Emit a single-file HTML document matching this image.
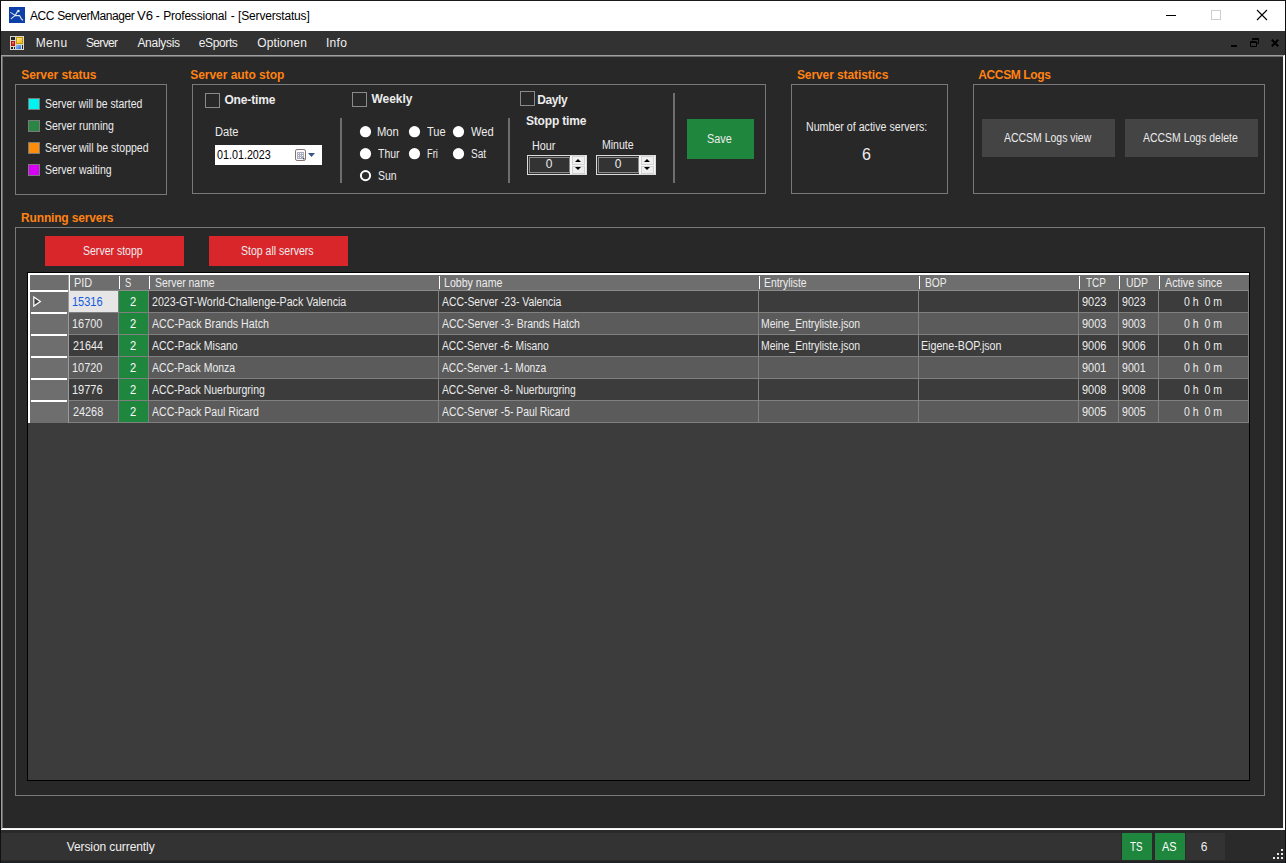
<!DOCTYPE html>
<html lang="de"><head><meta charset="utf-8"><title>ACC ServerManager V6 - Professional - [Serverstatus]</title>
<style>
html,body{margin:0;padding:0}
body{width:1286px;height:863px;position:relative;overflow:hidden;background:#282828;font-family:"Liberation Sans",sans-serif;font-size:12px;color:#ececec}
body>div,body>svg,body>span{position:absolute;display:block;box-sizing:content-box}
.t{white-space:pre;line-height:1}
</style></head>
<body>
<div style="left:0px;top:0px;width:1286px;height:31px;background:#ffffff;"></div>
<div style="left:0px;top:31px;width:1286px;height:24px;background:#323232;"></div>
<div style="left:0px;top:830px;width:1286px;height:33px;background:#2a2a2a;"></div>
<div style="left:0px;top:861px;width:1286px;height:1px;background:#222222;"></div>
<div style="left:0px;top:862px;width:1286px;height:1px;background:#1d2226;"></div>
<svg style="left:9px;top:7px" width="16" height="16" viewBox="0 0 16 16"><rect width="16" height="16" fill="#0d3fa8"/>
<path d="M2.2 11.6 L6.2 8.4 L8.4 4.6 M6.2 8.4 L1.8 5.6 M6.2 8.4 L10.6 8.6 L12.2 11.6 L13.6 13" stroke="#dde5ea" stroke-width="1.1" fill="none" stroke-linecap="round"/>
<circle cx="9.4" cy="4" r="1.3" fill="#dde5ea"/></svg>
<div style="left:1166px;top:15px;width:10px;height:1px;background:#000;"></div>
<div style="left:1211px;top:10px;width:8px;height:8px;border:1px solid #cdcdcd"></div>
<svg style="left:1256px;top:9px" width="12" height="12" viewBox="0 0 12 12"><path d="M1 1 L11 11 M11 1 L1 11" stroke="#000" stroke-width="1.1" fill="none"/></svg>
<svg style="left:10px;top:36px" width="14" height="14" viewBox="0 0 14 14"><defs>
<linearGradient id="gy" x1="0" y1="0" x2="1" y2="1"><stop offset="0" stop-color="#fff3a8"/><stop offset="1" stop-color="#f2b100"/></linearGradient>
<linearGradient id="gr" x1="0" y1="0" x2="0" y2="1"><stop offset="0" stop-color="#f5867a"/><stop offset="1" stop-color="#d4200f"/></linearGradient>
<linearGradient id="gb" x1="0" y1="0" x2="1" y2="1"><stop offset="0" stop-color="#8fc0f7"/><stop offset="1" stop-color="#2f6fd6"/></linearGradient></defs>
<rect width="14" height="14" fill="#dad7d0"/>
<rect x="1" y="1" width="4" height="3" fill="#262626"/><rect x="6" y="1" width="7" height="7" fill="#c79a00"/><rect x="7" y="2" width="5" height="5" fill="url(#gy)"/>
<rect x="1" y="5" width="4" height="5" fill="#b91508"/><rect x="2" y="6" width="2" height="3" fill="url(#gr)"/>
<rect x="1" y="11" width="2" height="2" fill="#262626"/><rect x="4" y="11" width="1" height="2" fill="#262626"/>
<rect x="6" y="9" width="5" height="4" fill="url(#gb)"/><rect x="12" y="9" width="1" height="4" fill="#262626"/></svg>
<div style="left:1231px;top:45px;width:6px;height:2px;background:#000;"></div>
<svg style="left:1250px;top:38px" width="9" height="9" viewBox="0 0 9 9"><path d="M2.5 2.5 V0.5 H8.5 V5.5 H6.5 M2.5 1.5 H8.5" stroke="#000" fill="none"/><path d="M0.5 3.5 H6.5 V8.5 H0.5 Z M0.5 4.5 H6.5" stroke="#000" fill="none"/></svg>
<svg style="left:1271px;top:39px" width="8" height="8" viewBox="0 0 8 8"><path d="M0.8 0.8 L7.2 7.2 M7.2 0.8 L0.8 7.2" stroke="#000" stroke-width="2" fill="none"/></svg>
<div style="left:1px;top:55px;width:1284px;height:775px;background:#282828;"></div>
<div style="left:1px;top:55px;width:1284px;height:1px;background:#a0a0a0;"></div>
<div style="left:2px;top:56px;width:1282px;height:1px;background:#696969;"></div>
<div style="left:1px;top:55px;width:1px;height:775px;background:#a0a0a0;"></div>
<div style="left:2px;top:56px;width:1px;height:773px;background:#696969;"></div>
<div style="left:1283px;top:56px;width:1px;height:773px;background:#f0f0f0;"></div>
<div style="left:1284px;top:55px;width:1px;height:775px;background:#ffffff;"></div>
<div style="left:2px;top:828px;width:1282px;height:1px;background:#f0f0f0;"></div>
<div style="left:1px;top:829px;width:1284px;height:1px;background:#ffffff;"></div>
<div style="left:0px;top:0px;width:1286px;height:1px;background:#1a1a1a;"></div>
<div style="left:0px;top:0px;width:1px;height:863px;background:#101010;"></div>
<div style="left:1285px;top:0px;width:1px;height:863px;background:#101010;"></div>
<div style="left:15px;top:84px;width:150px;height:109px;border:1px solid #797979"></div>
<div style="left:192px;top:84px;width:572px;height:108px;border:1px solid #797979"></div>
<div style="left:791px;top:84px;width:155px;height:108px;border:1px solid #797979"></div>
<div style="left:973px;top:84px;width:290px;height:108px;border:1px solid #797979"></div>
<div style="left:15px;top:227px;width:1248px;height:567px;border:1px solid #797979"></div>
<div style="left:28px;top:98px;width:10px;height:10px;background:#00f5f0;border:1px solid #7a7a7a"></div>
<div style="left:28px;top:120px;width:10px;height:10px;background:#2a8743;border:1px solid #7a7a7a"></div>
<div style="left:28px;top:142px;width:10px;height:10px;background:#ff8c0a;border:1px solid #7a7a7a"></div>
<div style="left:28px;top:164px;width:10px;height:10px;background:#d800f5;border:1px solid #7a7a7a"></div>
<div style="left:205px;top:93px;width:13px;height:13px;border:1px solid #8a8a8a"></div>
<div style="left:352px;top:92px;width:13px;height:13px;border:1px solid #8a8a8a"></div>
<div style="left:520px;top:91px;width:13px;height:13px;border:1px solid #8a8a8a"></div>
<div style="left:215px;top:145px;width:107px;height:20px;background:#ffffff;"></div>
<svg style="left:295px;top:149px" width="11" height="12" viewBox="0 0 11 12"><rect x="0.5" y="0.5" width="10" height="11" rx="1.6" fill="#fbfbff" stroke="#86706b"/>
<rect x="2" y="3" width="7" height="7" fill="#a9aebd"/><g fill="#f4f5fa"><rect x="3" y="4" width="1" height="1"/><rect x="5" y="4" width="1" height="1"/><rect x="7" y="4" width="1" height="1"/>
<rect x="3" y="6" width="1" height="1"/><rect x="5" y="6" width="1" height="1"/><rect x="7" y="6" width="1" height="1"/><rect x="3" y="8" width="1" height="1"/><rect x="5" y="8" width="1" height="1"/></g>
<rect x="8" y="9" width="1.4" height="1.4" fill="#4a4a55"/></svg>
<svg style="left:308px;top:153px" width="7" height="4" viewBox="0 0 7 4"><path d="M0 0 H7 L3.5 4 Z" fill="#38528a"/></svg>
<div style="left:340px;top:118px;width:2px;height:65px;background:#6e6e6e;"></div>
<div style="left:508px;top:118px;width:2px;height:65px;background:#6e6e6e;"></div>
<div style="left:673px;top:93px;width:2px;height:90px;background:#6e6e6e;"></div>
<svg style="left:358px;top:124px" width="15" height="15"><circle cx="7.5" cy="7.7" r="5.6" fill="#fff"/></svg>
<svg style="left:407px;top:124px" width="15" height="15"><circle cx="7.5" cy="7.7" r="5.6" fill="#fff"/></svg>
<svg style="left:451px;top:124px" width="15" height="15"><circle cx="7.5" cy="7.7" r="5.6" fill="#fff"/></svg>
<svg style="left:358px;top:146px" width="15" height="15"><circle cx="7.5" cy="7.7" r="5.6" fill="#fff"/></svg>
<svg style="left:407px;top:146px" width="15" height="15"><circle cx="7.5" cy="7.7" r="5.6" fill="#fff"/></svg>
<svg style="left:451px;top:146px" width="15" height="15"><circle cx="7.5" cy="7.7" r="5.6" fill="#fff"/></svg>
<svg style="left:358px;top:168px" width="15" height="15"><circle cx="7.5" cy="7.6" r="4.6" fill="#2d2d2d" stroke="#fff" stroke-width="2"/></svg>
<div style="left:527px;top:155px;width:58px;height:18px;border:1px solid #dcdcdc;background:#303030"></div>
<div style="left:529px;top:157px;width:39px;height:14px;border:1px solid #8c8c8c;background:#333"></div>
<div style="left:570px;top:156px;width:16px;height:18px;background:#f7f7f7;"></div>
<div style="left:572px;top:156px;width:11px;height:7px;background:#efefef;border:1px solid #d2d2d2"></div>
<div style="left:572px;top:166px;width:11px;height:6px;background:#efefef;border:1px solid #d2d2d2"></div>
<svg style="left:575px;top:159px" width="6" height="3" viewBox="0 0 6 3"><path d="M0 3 H6 L3 0 Z" fill="#000"/></svg>
<svg style="left:575px;top:167px" width="6" height="3" viewBox="0 0 6 3"><path d="M0 0 H6 L3 3 Z" fill="#000"/></svg>
<div style="left:596px;top:155px;width:58px;height:18px;border:1px solid #dcdcdc;background:#303030"></div>
<div style="left:598px;top:157px;width:39px;height:14px;border:1px solid #8c8c8c;background:#333"></div>
<div style="left:639px;top:156px;width:16px;height:18px;background:#f7f7f7;"></div>
<div style="left:641px;top:156px;width:11px;height:7px;background:#efefef;border:1px solid #d2d2d2"></div>
<div style="left:641px;top:166px;width:11px;height:6px;background:#efefef;border:1px solid #d2d2d2"></div>
<svg style="left:644px;top:159px" width="6" height="3" viewBox="0 0 6 3"><path d="M0 3 H6 L3 0 Z" fill="#000"/></svg>
<svg style="left:644px;top:167px" width="6" height="3" viewBox="0 0 6 3"><path d="M0 0 H6 L3 3 Z" fill="#000"/></svg>
<div style="left:687px;top:119px;width:67px;height:40px;background:#1f873d;"></div>
<div style="left:982px;top:119px;width:133px;height:38px;background:#444444;"></div>
<div style="left:1125px;top:119px;width:133px;height:38px;background:#444444;"></div>
<div style="left:45px;top:236px;width:139px;height:30px;background:#d9262b;"></div>
<div style="left:209px;top:236px;width:139px;height:30px;background:#d9262b;"></div>
<div style="left:27px;top:272px;width:1223px;height:509px;background:#000;"></div>
<div style="left:28px;top:273px;width:1221px;height:507px;background:#3c3c3c;"></div>
<div style="left:28px;top:273px;width:1221px;height:2px;background:#ffffff;"></div>
<div style="left:28px;top:275px;width:1221px;height:15px;background:#6e6e6e;"></div>
<div style="left:28px;top:290px;width:1221px;height:1px;background:#8c8c8c;"></div>
<div style="left:68px;top:275px;width:1px;height:148px;background:#9a9a9a;"></div>
<div style="left:69px;top:273px;width:1px;height:18px;background:#ffffff;"></div>
<div style="left:119px;top:276px;width:1px;height:13px;background:#ffffff;"></div>
<div style="left:149px;top:276px;width:1px;height:13px;background:#ffffff;"></div>
<div style="left:439px;top:276px;width:1px;height:13px;background:#ffffff;"></div>
<div style="left:759px;top:276px;width:1px;height:13px;background:#ffffff;"></div>
<div style="left:919px;top:276px;width:1px;height:13px;background:#ffffff;"></div>
<div style="left:1079px;top:276px;width:1px;height:13px;background:#ffffff;"></div>
<div style="left:1119px;top:276px;width:1px;height:13px;background:#ffffff;"></div>
<div style="left:1159px;top:276px;width:1px;height:13px;background:#ffffff;"></div>
<div style="left:69px;top:291px;width:1180px;height:21px;background:#3c3c3c;"></div>
<div style="left:69px;top:312px;width:1180px;height:1px;background:#808080;"></div>
<div style="left:119px;top:291px;width:29px;height:21px;background:#1f873d;"></div>
<div style="left:30px;top:291px;width:38px;height:22px;background:#6e6e6e;"></div>
<div style="left:28px;top:290px;width:40px;height:2px;background:#ffffff;"></div>
<div style="left:69px;top:313px;width:1180px;height:21px;background:#5b5b5b;"></div>
<div style="left:69px;top:334px;width:1180px;height:1px;background:#808080;"></div>
<div style="left:119px;top:313px;width:29px;height:21px;background:#1f873d;"></div>
<div style="left:30px;top:313px;width:38px;height:22px;background:#6e6e6e;"></div>
<div style="left:31px;top:312px;width:36px;height:2px;background:#ffffff;"></div>
<div style="left:69px;top:335px;width:1180px;height:21px;background:#3c3c3c;"></div>
<div style="left:69px;top:356px;width:1180px;height:1px;background:#808080;"></div>
<div style="left:119px;top:335px;width:29px;height:21px;background:#1f873d;"></div>
<div style="left:30px;top:335px;width:38px;height:22px;background:#6e6e6e;"></div>
<div style="left:31px;top:334px;width:36px;height:2px;background:#ffffff;"></div>
<div style="left:69px;top:357px;width:1180px;height:21px;background:#5b5b5b;"></div>
<div style="left:69px;top:378px;width:1180px;height:1px;background:#808080;"></div>
<div style="left:119px;top:357px;width:29px;height:21px;background:#1f873d;"></div>
<div style="left:30px;top:357px;width:38px;height:22px;background:#6e6e6e;"></div>
<div style="left:31px;top:356px;width:36px;height:2px;background:#ffffff;"></div>
<div style="left:69px;top:379px;width:1180px;height:21px;background:#3c3c3c;"></div>
<div style="left:69px;top:400px;width:1180px;height:1px;background:#808080;"></div>
<div style="left:119px;top:379px;width:29px;height:21px;background:#1f873d;"></div>
<div style="left:30px;top:379px;width:38px;height:22px;background:#6e6e6e;"></div>
<div style="left:31px;top:378px;width:36px;height:2px;background:#ffffff;"></div>
<div style="left:69px;top:401px;width:1180px;height:21px;background:#5b5b5b;"></div>
<div style="left:69px;top:422px;width:1180px;height:1px;background:#808080;"></div>
<div style="left:119px;top:401px;width:29px;height:21px;background:#1f873d;"></div>
<div style="left:30px;top:401px;width:38px;height:22px;background:#6e6e6e;"></div>
<div style="left:31px;top:400px;width:36px;height:2px;background:#ffffff;"></div>
<div style="left:69px;top:291px;width:49px;height:21px;background:#e6e6e6;"></div>
<div style="left:28px;top:273px;width:2px;height:150px;background:#ffffff;"></div>
<div style="left:118px;top:291px;width:1px;height:132px;background:#808080;"></div>
<div style="left:148px;top:291px;width:1px;height:132px;background:#808080;"></div>
<div style="left:438px;top:291px;width:1px;height:132px;background:#808080;"></div>
<div style="left:758px;top:291px;width:1px;height:132px;background:#808080;"></div>
<div style="left:918px;top:291px;width:1px;height:132px;background:#808080;"></div>
<div style="left:1078px;top:291px;width:1px;height:132px;background:#808080;"></div>
<div style="left:1118px;top:291px;width:1px;height:132px;background:#808080;"></div>
<div style="left:1158px;top:291px;width:1px;height:132px;background:#808080;"></div>
<div style="left:1248px;top:291px;width:1px;height:132px;background:#808080;"></div>
<svg style="left:33px;top:296px" width="9" height="11" viewBox="0 0 9 11"><path d="M0.8 0.9 L7.4 5.5 L0.8 10.1 Z" fill="#404040" stroke="#fff" stroke-width="1.2"/></svg>
<div style="left:1122px;top:833px;width:30px;height:27px;background:#1f873d;"></div>
<div style="left:1155px;top:833px;width:30px;height:27px;background:#1f873d;"></div>
<div style="left:1px;top:833px;width:1120px;height:27px;background:#333333;"></div>
<div style="left:1186px;top:833px;width:39px;height:27px;background:#333333;"></div>
<svg style="left:1272px;top:848px" width="12" height="12" viewBox="0 0 12 12" fill="#e8e8e8"><rect x="9" y="1" width="2" height="2"/><rect x="5" y="5" width="2" height="2"/><rect x="9" y="5" width="2" height="2"/>
<rect x="1" y="9" width="2" height="2"/><rect x="5" y="9" width="2" height="2"/><rect x="9" y="9" width="2" height="2"/></svg>
<span id="t0" class="t" style="left:30.07px;top:10.00px;color:#000000;letter-spacing:-0.445px;">ACC</span>
<span id="t1" class="t" style="left:57.29px;top:10.00px;color:#000000;letter-spacing:-0.436px;">ServerManager</span>
<span id="t2" class="t" style="left:136.71px;top:10.00px;color:#000000;transform-origin:0 0;transform:scaleX(1.091);">V6</span>
<span id="t3" class="t" style="left:155.75px;top:10.00px;color:#000000;">-</span>
<span id="t4" class="t" style="left:163.26px;top:10.00px;color:#000000;letter-spacing:-0.214px;">Professional</span>
<span id="t5" class="t" style="left:230.80px;top:10.00px;color:#000000;">-</span>
<span id="t6" class="t" style="left:238.11px;top:10.00px;color:#000000;letter-spacing:-0.185px;">[Serverstatus]</span>
<span id="t7" class="t" style="left:35.65px;top:37.00px;color:#f0f0f0;letter-spacing:0.472px;">Menu</span>
<span id="t8" class="t" style="left:85.89px;top:37.00px;color:#f0f0f0;letter-spacing:-0.640px;">Server</span>
<span id="t9" class="t" style="left:137.42px;top:37.00px;color:#f0f0f0;letter-spacing:-0.289px;">Analysis</span>
<span id="t10" class="t" style="left:198.75px;top:37.00px;color:#f0f0f0;letter-spacing:-0.374px;">eSports</span>
<span id="t11" class="t" style="left:257.23px;top:37.00px;color:#f0f0f0;letter-spacing:0.130px;">Optionen</span>
<span id="t12" class="t" style="left:325.91px;top:37.00px;color:#f0f0f0;letter-spacing:0.312px;">Info</span>
<span id="t13" class="t" style="left:66.65px;top:841.00px;color:#f0f0f0;letter-spacing:-0.086px;">Version currently</span>
<span id="t14" class="t" style="left:1130.20px;top:841.00px;color:#ffffff;transform-origin:0 0;transform:scaleX(0.817);">TS</span>
<span id="t15" class="t" style="left:1161.73px;top:841.00px;color:#ffffff;transform-origin:0 0;transform:scaleX(0.910);">AS</span>
<span id="t16" class="t" style="left:1200.84px;top:841.00px;color:#f0f0f0;">6</span>
<span id="t17" class="t" style="left:21.23px;top:69.00px;font-weight:700;color:#ff8212;letter-spacing:-0.077px;">Server status</span>
<span id="t18" class="t" style="left:190.24px;top:69.00px;font-weight:700;color:#ff8212;letter-spacing:-0.042px;">Server auto stop</span>
<span id="t19" class="t" style="left:796.88px;top:69.00px;font-weight:700;color:#ff8212;letter-spacing:-0.081px;">Server statistics</span>
<span id="t20" class="t" style="left:978.25px;top:69.00px;font-weight:700;color:#ff8212;letter-spacing:-0.369px;">ACCSM Logs</span>
<span id="t21" class="t" style="left:21.10px;top:212.00px;font-weight:700;color:#ff8212;letter-spacing:-0.175px;">Running servers</span>
<span id="t22" class="t" style="left:45.44px;top:98.00px;transform-origin:0 0;transform:scaleX(0.868);">Server will be started</span>
<span id="t23" class="t" style="left:44.82px;top:120.00px;transform-origin:0 0;transform:scaleX(0.876);">Server running</span>
<span id="t24" class="t" style="left:45.13px;top:142.00px;transform-origin:0 0;transform:scaleX(0.877);">Server will be stopped</span>
<span id="t25" class="t" style="left:45.29px;top:164.00px;transform-origin:0 0;transform:scaleX(0.876);">Server waiting</span>
<span id="t26" class="t" style="left:224.43px;top:94.00px;font-weight:700;letter-spacing:-0.149px;">One-time</span>
<span id="t27" class="t" style="left:371.40px;top:93.00px;font-weight:700;">Weekly</span>
<span id="t28" class="t" style="left:537.19px;top:94.00px;font-weight:700;letter-spacing:-0.380px;">Dayly</span>
<span id="t29" class="t" style="left:525.91px;top:115.00px;font-weight:700;letter-spacing:-0.165px;">Stopp time</span>
<span id="t30" class="t" style="left:214.83px;top:126.00px;transform-origin:0 0;transform:scaleX(0.929);">Date</span>
<span id="t31" class="t" style="left:217.26px;top:149.00px;color:#000000;transform-origin:0 0;transform:scaleX(0.896);">01.01.2023</span>
<span id="t32" class="t" style="left:377.10px;top:126.00px;transform-origin:0 0;transform:scaleX(0.934);">Mon</span>
<span id="t33" class="t" style="left:427.27px;top:126.00px;transform-origin:0 0;transform:scaleX(0.922);">Tue</span>
<span id="t34" class="t" style="left:471.43px;top:126.00px;transform-origin:0 0;transform:scaleX(0.931);">Wed</span>
<span id="t35" class="t" style="left:378.03px;top:148.00px;transform-origin:0 0;transform:scaleX(0.870);">Thur</span>
<span id="t36" class="t" style="left:426.85px;top:148.00px;transform-origin:0 0;transform:scaleX(0.773);">Fri</span>
<span id="t37" class="t" style="left:470.99px;top:148.00px;transform-origin:0 0;transform:scaleX(0.840);">Sat</span>
<span id="t38" class="t" style="left:378.29px;top:170.00px;transform-origin:0 0;transform:scaleX(0.872);">Sun</span>
<span id="t39" class="t" style="left:531.95px;top:140.00px;transform-origin:0 0;transform:scaleX(0.902);">Hour</span>
<span id="t40" class="t" style="left:601.80px;top:139.00px;transform-origin:0 0;transform:scaleX(0.878);">Minute</span>
<span id="t41" class="t" style="left:545.69px;top:158.00px;">0</span>
<span id="t42" class="t" style="left:614.74px;top:158.00px;">0</span>
<span id="t43" class="t" style="left:706.67px;top:133.00px;transform-origin:0 0;transform:scaleX(0.903);">Save</span>
<span id="t44" class="t" style="left:805.94px;top:121.00px;transform-origin:0 0;transform:scaleX(0.887);">Number of active servers:</span>
<span id="t45" class="t" style="left:862.09px;top:147.00px;font-size:16px;">6</span>
<span id="t46" class="t" style="left:1004.19px;top:132.00px;transform-origin:0 0;transform:scaleX(0.872);">ACCSM Logs view</span>
<span id="t47" class="t" style="left:1142.87px;top:132.00px;transform-origin:0 0;transform:scaleX(0.872);">ACCSM Logs delete</span>
<span id="t48" class="t" style="left:83.43px;top:245.00px;transform-origin:0 0;transform:scaleX(0.877);">Server stopp</span>
<span id="t49" class="t" style="left:240.79px;top:245.00px;transform-origin:0 0;transform:scaleX(0.878);">Stop all servers</span>
<span id="t50" class="t" style="left:74.47px;top:277.00px;transform-origin:0 0;transform:scaleX(0.910);">PID</span>
<span id="t51" class="t" style="left:125.41px;top:277.00px;transform-origin:0 0;transform:scaleX(0.781);">S</span>
<span id="t52" class="t" style="left:155.02px;top:277.00px;transform-origin:0 0;transform:scaleX(0.868);">Server name</span>
<span id="t53" class="t" style="left:444.27px;top:277.00px;transform-origin:0 0;transform:scaleX(0.884);">Lobby name</span>
<span id="t54" class="t" style="left:764.18px;top:277.00px;transform-origin:0 0;transform:scaleX(0.863);">Entryliste</span>
<span id="t55" class="t" style="left:925.16px;top:277.00px;transform-origin:0 0;transform:scaleX(0.855);">BOP</span>
<span id="t56" class="t" style="left:1085.87px;top:277.00px;transform-origin:0 0;transform:scaleX(0.828);">TCP</span>
<span id="t57" class="t" style="left:1125.80px;top:277.00px;transform-origin:0 0;transform:scaleX(0.867);">UDP</span>
<span id="t58" class="t" style="left:1165.33px;top:277.00px;transform-origin:0 0;transform:scaleX(0.893);">Active since</span>
<span id="t59" class="t" style="left:72.14px;top:296.00px;color:#145ae1;transform-origin:0 0;transform:scaleX(0.916);">15316</span>
<span id="t60" class="t" style="left:129.85px;top:296.00px;color:#ffffff;transform-origin:0 0;transform:scaleX(0.928);">2</span>
<span id="t61" class="t" style="left:152.15px;top:296.00px;transform-origin:0 0;transform:scaleX(0.887);">2023-GT-World-Challenge-Pack Valencia</span>
<span id="t62" class="t" style="left:442.07px;top:296.00px;transform-origin:0 0;transform:scaleX(0.866);">ACC-Server -23- Valencia</span>
<span id="t63" class="t" style="left:1081.98px;top:296.00px;transform-origin:0 0;transform:scaleX(0.916);">9023</span>
<span id="t64" class="t" style="left:1121.82px;top:296.00px;transform-origin:0 0;transform:scaleX(0.881);">9023</span>
<span id="t65" class="t" style="left:1183.88px;top:296.00px;transform-origin:0 0;transform:scaleX(0.874);">0 h  0 m</span>
<span id="t66" class="t" style="left:72.28px;top:318.00px;transform-origin:0 0;transform:scaleX(0.909);">16700</span>
<span id="t67" class="t" style="left:129.85px;top:318.00px;color:#ffffff;transform-origin:0 0;transform:scaleX(0.928);">2</span>
<span id="t68" class="t" style="left:151.99px;top:318.00px;transform-origin:0 0;transform:scaleX(0.885);">ACC-Pack Brands Hatch</span>
<span id="t69" class="t" style="left:441.91px;top:318.00px;transform-origin:0 0;transform:scaleX(0.869);">ACC-Server -3- Brands Hatch</span>
<span id="t70" class="t" style="left:761.24px;top:318.00px;transform-origin:0 0;transform:scaleX(0.868);">Meine_Entryliste.json</span>
<span id="t71" class="t" style="left:1081.98px;top:318.00px;transform-origin:0 0;transform:scaleX(0.916);">9003</span>
<span id="t72" class="t" style="left:1121.82px;top:318.00px;transform-origin:0 0;transform:scaleX(0.881);">9003</span>
<span id="t73" class="t" style="left:1183.88px;top:318.00px;transform-origin:0 0;transform:scaleX(0.874);">0 h  0 m</span>
<span id="t74" class="t" style="left:72.67px;top:340.00px;transform-origin:0 0;transform:scaleX(0.895);">21644</span>
<span id="t75" class="t" style="left:129.85px;top:340.00px;color:#ffffff;transform-origin:0 0;transform:scaleX(0.928);">2</span>
<span id="t76" class="t" style="left:152.07px;top:340.00px;transform-origin:0 0;transform:scaleX(0.874);">ACC-Pack Misano</span>
<span id="t77" class="t" style="left:442.03px;top:340.00px;transform-origin:0 0;transform:scaleX(0.856);">ACC-Server -6- Misano</span>
<span id="t78" class="t" style="left:761.24px;top:340.00px;transform-origin:0 0;transform:scaleX(0.868);">Meine_Entryliste.json</span>
<span id="t79" class="t" style="left:921.03px;top:340.00px;transform-origin:0 0;transform:scaleX(0.889);">Eigene-BOP.json</span>
<span id="t80" class="t" style="left:1082.05px;top:340.00px;transform-origin:0 0;transform:scaleX(0.914);">9006</span>
<span id="t81" class="t" style="left:1121.82px;top:340.00px;transform-origin:0 0;transform:scaleX(0.882);">9006</span>
<span id="t82" class="t" style="left:1183.88px;top:340.00px;transform-origin:0 0;transform:scaleX(0.874);">0 h  0 m</span>
<span id="t83" class="t" style="left:72.28px;top:362.00px;transform-origin:0 0;transform:scaleX(0.909);">10720</span>
<span id="t84" class="t" style="left:129.85px;top:362.00px;color:#ffffff;transform-origin:0 0;transform:scaleX(0.928);">2</span>
<span id="t85" class="t" style="left:151.99px;top:362.00px;transform-origin:0 0;transform:scaleX(0.871);">ACC-Pack Monza</span>
<span id="t86" class="t" style="left:441.95px;top:362.00px;transform-origin:0 0;transform:scaleX(0.853);">ACC-Server -1- Monza</span>
<span id="t87" class="t" style="left:1082.11px;top:362.00px;transform-origin:0 0;transform:scaleX(0.909);">9001</span>
<span id="t88" class="t" style="left:1121.82px;top:362.00px;transform-origin:0 0;transform:scaleX(0.881);">9001</span>
<span id="t89" class="t" style="left:1183.88px;top:362.00px;transform-origin:0 0;transform:scaleX(0.874);">0 h  0 m</span>
<span id="t90" class="t" style="left:72.14px;top:384.00px;transform-origin:0 0;transform:scaleX(0.916);">19776</span>
<span id="t91" class="t" style="left:129.85px;top:384.00px;color:#ffffff;transform-origin:0 0;transform:scaleX(0.928);">2</span>
<span id="t92" class="t" style="left:152.07px;top:384.00px;transform-origin:0 0;transform:scaleX(0.872);">ACC-Pack Nuerburgring</span>
<span id="t93" class="t" style="left:442.03px;top:384.00px;transform-origin:0 0;transform:scaleX(0.857);">ACC-Server -8- Nuerburgring</span>
<span id="t94" class="t" style="left:1082.05px;top:384.00px;transform-origin:0 0;transform:scaleX(0.913);">9008</span>
<span id="t95" class="t" style="left:1121.82px;top:384.00px;transform-origin:0 0;transform:scaleX(0.881);">9008</span>
<span id="t96" class="t" style="left:1183.88px;top:384.00px;transform-origin:0 0;transform:scaleX(0.874);">0 h  0 m</span>
<span id="t97" class="t" style="left:72.95px;top:406.00px;transform-origin:0 0;transform:scaleX(0.905);">24268</span>
<span id="t98" class="t" style="left:129.85px;top:406.00px;color:#ffffff;transform-origin:0 0;transform:scaleX(0.928);">2</span>
<span id="t99" class="t" style="left:152.07px;top:406.00px;transform-origin:0 0;transform:scaleX(0.880);">ACC-Pack Paul Ricard</span>
<span id="t100" class="t" style="left:442.07px;top:406.00px;transform-origin:0 0;transform:scaleX(0.863);">ACC-Server -5- Paul Ricard</span>
<span id="t101" class="t" style="left:1081.98px;top:406.00px;transform-origin:0 0;transform:scaleX(0.916);">9005</span>
<span id="t102" class="t" style="left:1121.82px;top:406.00px;transform-origin:0 0;transform:scaleX(0.881);">9005</span>
<span id="t103" class="t" style="left:1183.88px;top:406.00px;transform-origin:0 0;transform:scaleX(0.874);">0 h  0 m</span>
</body></html>
